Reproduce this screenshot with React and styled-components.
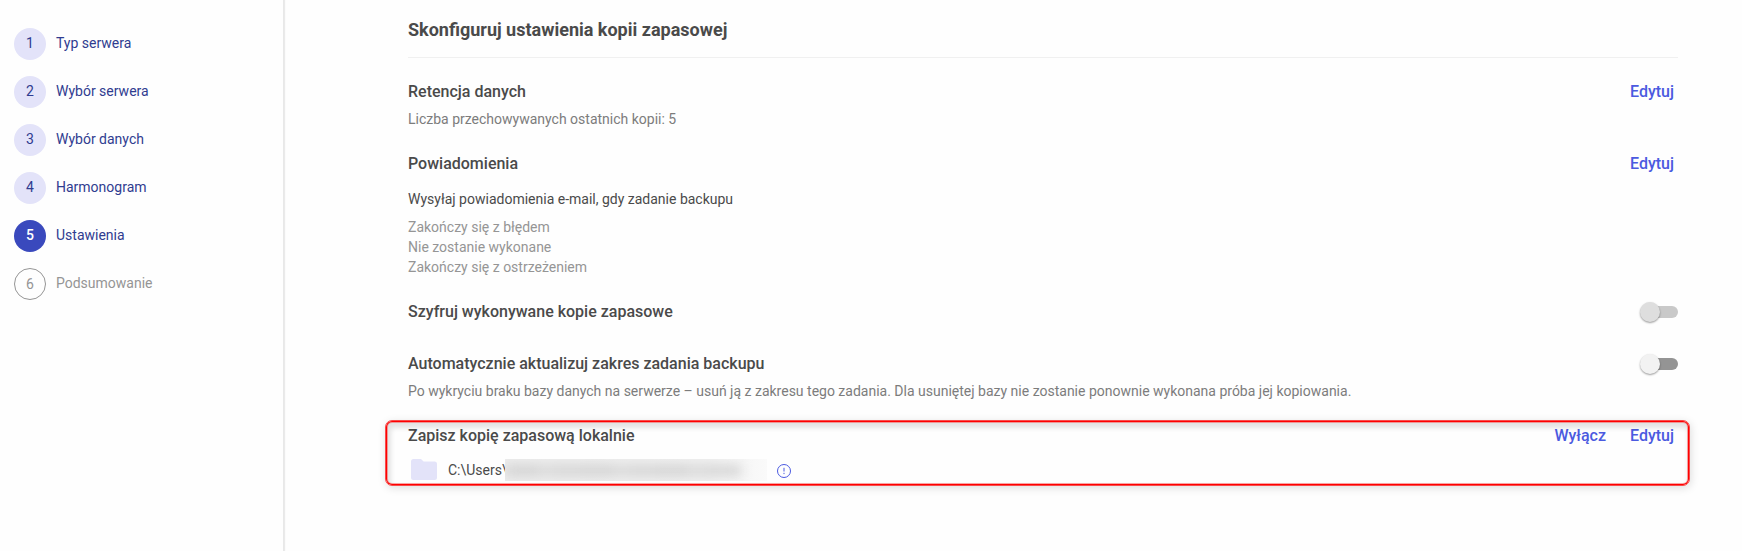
import React from "react";
import styled, { createGlobalStyle, css } from "styled-components";

const STEPS = [
  { label: "Typ serwera", state: "done" },
  { label: "Wybór serwera", state: "done" },
  { label: "Wybór danych", state: "done" },
  { label: "Harmonogram", state: "done" },
  { label: "Ustawienia", state: "active" },
  { label: "Podsumowanie", state: "pending" },
];

const NOTIFICATIONS = [
  "Zakończy się z błędem",
  "Nie zostanie wykonane",
  "Zakończy się z ostrzeżeniem",
];

function Section ({ title, actions, children }) {
  return (
    <SectionBox>
      <SectionHeader>
        <SectionTitle>{title}</SectionTitle>
        {actions}
      </SectionHeader>
      {children}
    </SectionBox>
  )
}

function Toggle ({ disabled }) {
  return (
    <Track type="button" role="switch" aria-checked={false} disabled={disabled}>
      <Thumb $disabled={disabled} />
    </Track>
  )
}

function App () {
  return (
    <>
      <GlobalStyle />
      <Page>
        <Sidebar>
          {STEPS.map(({ label, state }, i) => (
            <Step key={label}>
              <StepNumber $state={state}>{i + 1}</StepNumber>
              <StepLabel $state={state}>{label}</StepLabel>
            </Step>
          ))}
        </Sidebar>
        <Content>
          <Heading>Skonfiguruj ustawienia kopii zapasowej</Heading>

          <Section title="Retencja danych" actions={<Link>Edytuj</Link>}>
            <Description>Liczba przechowywanych ostatnich kopii: 5</Description>
          </Section>

          <Section title="Powiadomienia" actions={<Link>Edytuj</Link>}>
            <Lead>Wysyłaj powiadomienia e-mail, gdy zadanie backupu</Lead>
            <List>
              {NOTIFICATIONS.map(item => <li key={item}>{item}</li>)}
            </List>
          </Section>

          <Section title="Szyfruj wykonywane kopie zapasowe" actions={<Toggle disabled />} />

          <Section title="Automatycznie aktualizuj zakres zadania backupu" actions={<Toggle />}>
            <Description>
              Po wykryciu braku bazy danych na serwerze – usuń ją z zakresu tego zadania. Dla usuniętej bazy nie zostanie ponownie wykonana próba jej kopiowania.
            </Description>
          </Section>

          <Section
            title="Zapisz kopię zapasową lokalnie"
            actions={<><Link>Wyłącz</Link><Link>Edytuj</Link></>}
          >
            <PathRow>
              <FolderIcon viewBox="0 0 26 21">
                <path d="M2.5 0H10l2.6 2.6h10.9A2.5 2.5 0 0 1 26 5.1v13.4a2.5 2.5 0 0 1-2.5 2.5h-21A2.5 2.5 0 0 1 0 18.5v-16A2.5 2.5 0 0 1 2.5 0z" />
              </FolderIcon>
              <span>C:\Users\</span>
              <Redacted><Smudge /></Redacted>
              <InfoIcon viewBox="0 0 14 14">
                <circle cx="7" cy="7" r="6.5" />
                <path d="M7 3.8v3.7M7 8.8v1.3" />
              </InfoIcon>
            </PathRow>
            <Highlight />
          </Section>
        </Content>
      </Page>
    </>
  )
}

const GlobalStyle = createGlobalStyle`
  * {
    box-sizing: border-box;
  }
  body {
    margin: 0;
    background: #fefefe;
    font-family: Roboto, "Liberation Sans", sans-serif;
    font-size: 14px;
    line-height: 20px;
    overflow: hidden;
  }
`;

const Page = styled.div`
  display: flex;
  height: 551px;
`;

const Sidebar = styled.nav`
  display: flex;
  flex-direction: column;
  flex: none;
  gap: 16px;
  width: 284px;
  padding: 28px 14px;
  border-right: 1px solid #e8e8e8;
  box-shadow: 1px 0 1px rgba(0, 0, 0, 0.08);
`;

const Step = styled.div`
  display: flex;
  gap: 10px;
  height: 32px;
`;

const stepNumberStyles = {
  done: css`
    padding-bottom: 2px;
    background: #e3e3f9;
    color: #303c90;
  `,
  active: css`
    padding-bottom: 2px;
    background: #3a49bd;
    color: #fff;
    font-weight: 500;
  `,
  pending: css`
    border: 1px solid #959595;
    color: #959595;
  `,
};

const StepNumber = styled.span`
  display: flex;
  align-items: center;
  justify-content: center;
  width: 32px;
  height: 32px;
  border-radius: 50%;
  ${props => stepNumberStyles[props.$state]};
`;

const StepLabel = styled.span`
  padding-top: 5px;
  color: ${props => props.$state === 'pending' ? '#959595' : '#303c90'};
`;

const Content = styled.main`
  flex: 1;
  padding: 17px 64px 0 124px;
`;

const Heading = styled.h1`
  height: 41px;
  margin: 0 0 22px;
  border-bottom: 1px solid #f0f0f0;
  color: #4a4a4a;
  font-size: 18px;
  font-weight: 700;
  line-height: 26px;
`;

const SectionBox = styled.section`
  position: relative;
  margin-bottom: 23px;

  &:nth-of-type(3) {
    margin-bottom: 28px;
  }
`;

const SectionHeader = styled.div`
  display: flex;
  align-items: center;
  gap: 24px;
  height: 24px;
`;

const SectionTitle = styled.h2`
  flex: 1;
  margin: 0;
  color: #4a4a4a;
  font-size: 16px;
  font-weight: 500;
  line-height: 24px;
`;

const Link = styled.a`
  color: #4b5ae0;
  cursor: pointer;
  font-size: 16px;
  font-weight: 500;
  line-height: 24px;

  &:last-child {
    margin-right: 4px;
  }
`;

const Description = styled.p`
  margin: 5px 0 0;
  color: #7c7c7c;
`;

const Lead = styled.p`
  margin: 13px 0 8px;
  color: #4a4a4a;
`;

const List = styled.ul`
  margin: 0;
  padding: 0;
  color: #959595;
  list-style: none;
`;

const Track = styled.button`
  display: flex;
  align-items: center;
  width: 36px;
  height: 12px;
  padding: 0;
  border: 0;
  border-radius: 6px;
  background: ${props => props.disabled ? '#c9c9c9' : '#949494'};
`;

const Thumb = styled.span`
  flex: none;
  width: 20px;
  height: 20px;
  margin-left: -2px;
  border-radius: 50%;
  background: ${props => props.$disabled ? '#dedede' : '#f2f2f2'};
  box-shadow: 0 1px 2px rgba(0, 0, 0, 0.4);
`;

const PathRow = styled.div`
  display: flex;
  align-items: center;
  height: 22px;
  margin-top: 11px;
  padding-left: 3px;
  color: #4a4a4a;
`;

const FolderIcon = styled.svg`
  width: 26px;
  height: 21px;
  margin: 0 11px 1px 0;
  fill: #e3e3f9;
`;

const Redacted = styled.span`
  display: flex;
  align-items: center;
  width: 262px;
  height: 22px;
  margin-left: -3px;
  overflow: hidden;
  background: linear-gradient(90deg, #ededed, #f0f0f0 75%, #fafafa);
`;

const Smudge = styled.span`
  width: 236px;
  height: 9px;
  background: repeating-linear-gradient(90deg, #cdcdcd 0 34px, #d6d6d6 34px 48px, #d0d0d0 48px 75px);
  filter: blur(6px);
`;

const InfoIcon = styled.svg`
  width: 14px;
  height: 14px;
  margin: 2px 0 0 10px;
  fill: none;
  stroke: #4b5ae0;
  stroke-width: 1;
`;

// red marker frame drawn over the section
const Highlight = styled.div`
  position: absolute;
  top: -4px;
  left: -23px;
  right: -12px;
  height: 66px;
  border: 1px solid #f84b4b;
  border-radius: 7px;
  box-shadow:
    inset 0 0 0 1px #ff0000,
    inset 0 0 0 2px #f84b4b80,
    inset 2px 4px 5px 3px rgba(0, 0, 0, 0.11),
    1px 2px 8px rgba(0, 0, 0, 0.13);
  pointer-events: none;
`;

export default App;
